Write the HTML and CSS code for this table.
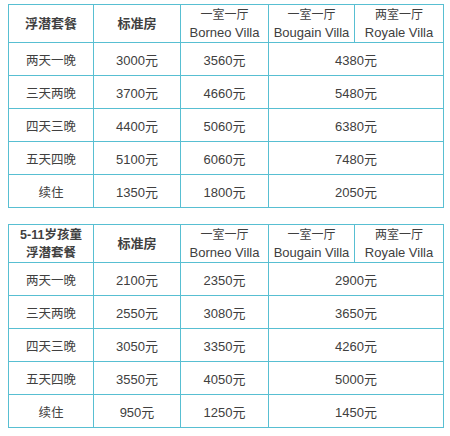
FILE: index.html
```html
<!DOCTYPE html>
<html lang="zh">
<head>
<meta charset="utf-8">
<link rel="stylesheet" href="styles.css">
</head>
<body>
<div class="page">
  <table class="price">
    <colgroup><col class="c1"><col class="c2"><col class="c3"><col class="c4"><col class="c5"></colgroup>
    <tr class="head">
      <th class="strong">浮潜套餐</th>
      <th class="strong">标准房</th>
      <th><span class="cn">一室一厅</span><br>Borneo Villa</th>
      <th><span class="cn">一室一厅</span><br>Bougain Villa</th>
      <th><span class="cn">两室一厅</span><br>Royale Villa</th>
    </tr>
    <tr><td class="name">两天一晚</td><td>3000元</td><td>3560元</td><td colspan="2">4380元</td></tr>
    <tr><td class="name">三天两晚</td><td>3700元</td><td>4660元</td><td colspan="2">5480元</td></tr>
    <tr><td class="name">四天三晚</td><td>4400元</td><td>5060元</td><td colspan="2">6380元</td></tr>
    <tr><td class="name">五天四晚</td><td>5100元</td><td>6060元</td><td colspan="2">7480元</td></tr>
    <tr><td class="name">续住</td><td>1350元</td><td>1800元</td><td colspan="2">2050元</td></tr>
  </table>
  <table class="price">
    <colgroup><col class="c1"><col class="c2"><col class="c3"><col class="c4"><col class="c5"></colgroup>
    <tr class="head">
      <th class="medium">5-11岁孩童<br>浮潜套餐</th>
      <th class="strong">标准房</th>
      <th><span class="cn">一室一厅</span><br>Borneo Villa</th>
      <th><span class="cn">一室一厅</span><br>Bougain Villa</th>
      <th><span class="cn">两室一厅</span><br>Royale Villa</th>
    </tr>
    <tr><td class="name">两天一晚</td><td>2100元</td><td>2350元</td><td colspan="2">2900元</td></tr>
    <tr><td class="name">三天两晚</td><td>2550元</td><td>3080元</td><td colspan="2">3650元</td></tr>
    <tr><td class="name">四天三晚</td><td>3050元</td><td>3350元</td><td colspan="2">4260元</td></tr>
    <tr><td class="name">五天四晚</td><td>3550元</td><td>4050元</td><td colspan="2">5000元</td></tr>
    <tr><td class="name">续住</td><td>950元</td><td>1250元</td><td colspan="2">1450元</td></tr>
  </table>
</div>
</body>
</html>
```
FILE: styles.css
```css
html, body {
  margin: 0;
  padding: 0;
  background: #ffffff;
}
.page {
  padding: 4px 0 0 8px;
  display: flex;
  flex-direction: column;
  gap: 16px;
  font-family: "Liberation Sans", "Noto Sans CJK SC", sans-serif;
  color: #404040;
}
.price {
  width: 435px;
  border-collapse: collapse;
  table-layout: fixed;
}
.c1 { width: 85px; }
.c2 { width: 87px; }
.c3 { width: 88px; }
.c4 { width: 86px; }
.c5 { width: 89px; }
.price th, .price td {
  border: 1.5px solid #58bfd2;
  text-align: center;
  padding: 0;
}
.price th {
  height: 37px;
  font-size: 13px;
  font-weight: normal;
  line-height: 17px;
}
.price td {
  height: 32px;
  font-size: 13px;
}
.price td.name {
  font-size: 12.5px;
}
.price th.strong {
  font-size: 13px;
  font-weight: bold;
}
.price th.medium {
  font-size: 12.5px;
  font-weight: bold;
  line-height: 18px;
}
.cn {
  font-size: 12px;
}
```
